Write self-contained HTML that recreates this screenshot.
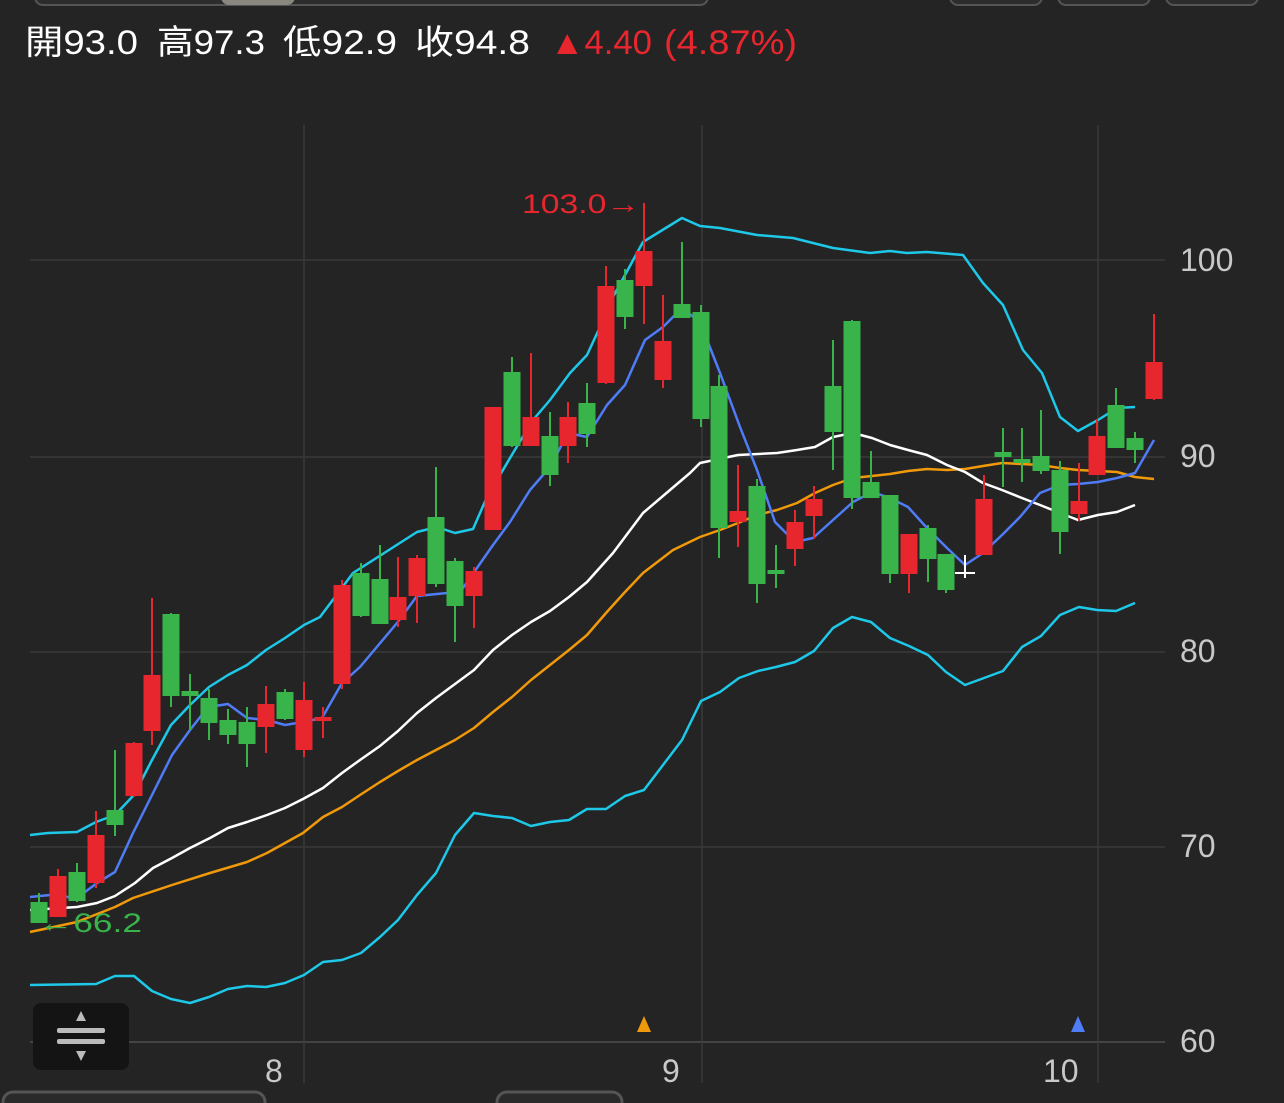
<!DOCTYPE html>
<html><head><meta charset="utf-8"><style>
html,body{margin:0;padding:0;background:#242424;width:1284px;height:1103px;overflow:hidden}
svg{display:block}
</style></head><body>
<svg width="1284" height="1103" viewBox="0 0 1284 1103" xmlns="http://www.w3.org/2000/svg">
<rect width="1284" height="1103" fill="#242424"/>
<!-- top controls -->
<rect x="35" y="-30" width="673" height="35" rx="8" fill="#2c2c2c" stroke="#555" stroke-width="2"/>
<rect x="221" y="-20" width="74" height="25" rx="8" fill="#8a8780"/>
<rect x="950" y="-30" width="92" height="35" rx="8" fill="#2c2c2c" stroke="#555" stroke-width="2"/>
<rect x="1058" y="-30" width="92" height="35" rx="8" fill="#2c2c2c" stroke="#555" stroke-width="2"/>
<rect x="1166" y="-30" width="92" height="35" rx="8" fill="#2c2c2c" stroke="#555" stroke-width="2"/>
<!-- header -->
<g font-family="Liberation Sans, Noto Sans CJK TC, sans-serif" font-size="34" fill="#fff">
<text x="25" y="54" textLength="113" lengthAdjust="spacingAndGlyphs">開93.0</text>
<text x="157" y="54" textLength="108" lengthAdjust="spacingAndGlyphs">高97.3</text>
<text x="283" y="54" textLength="114" lengthAdjust="spacingAndGlyphs">低92.9</text>
<text x="415" y="54" textLength="115" lengthAdjust="spacingAndGlyphs">收94.8</text>
<text x="550" y="54" fill="#e8262e" textLength="102" lengthAdjust="spacingAndGlyphs">▲4.40</text>
<text x="664" y="54" fill="#e8262e" textLength="133" lengthAdjust="spacingAndGlyphs">(4.87%)</text>
</g>
<!-- grid -->
<g stroke="#3a3a3a" stroke-width="1.5">
<line x1="30" y1="260" x2="1165" y2="260"/><line x1="30" y1="457" x2="1165" y2="457"/>
<line x1="30" y1="652" x2="1165" y2="652"/><line x1="30" y1="847" x2="1165" y2="847"/>
<line x1="30" y1="1042" x2="1165" y2="1042" stroke="#444" stroke-width="2"/>
<line x1="304" y1="125" x2="304" y2="1083"/><line x1="702" y1="125" x2="702" y2="1083"/><line x1="1098" y1="125" x2="1098" y2="1083"/>
</g>
<g font-family="Liberation Sans, sans-serif" font-size="32" fill="#c8c8c8">
<text x="1180" y="271">100</text><text x="1180" y="467">90</text><text x="1180" y="662">80</text><text x="1180" y="857">70</text><text x="1180" y="1052">60</text>
<text x="265" y="1082">8</text><text x="662" y="1082">9</text><text x="1043" y="1082">10</text>
</g>
<!-- bands & MAs -->
<g fill="none" stroke-width="2.5" stroke-linejoin="round">
<polyline stroke="#1ec8e8" points="30,835 48,833 77,832 96,822 115,815 134,795 152,760 171,725 190,705 209,687 228,675 247,665 266,650 285,638 304,625 320,617 353,573 417,532 437,527 455,533 473,529 487,497 513,453 533,420 550,400 570,373 587,355 600,327 613,297 643,242 682,218 700,226 720,228 757,235 793,238 833,248 870,253 890,251 907,253 927,252 963,255 983,283 1003,305 1023,350 1042,373 1060,417 1078,431 1098,420 1117,408 1135,407"/>
<polyline stroke="#1ec8e8" points="30,985 96,984 115,976 134,976 152,991 171,999 190,1003 209,997 228,989 247,986 266,987 285,983 304,975 323,962 342,960 361,953 380,937 398,920 417,895 436,873 455,835 474,813 493,816 512,818 531,826 550,822 569,820 587,809 606,809 625,796 644,790 663,765 682,740 701,701 720,692 739,678 758,671 776,667 795,662 814,651 833,628 852,617 871,622 890,638 909,646 928,655 946,672 965,685 984,678 1003,671 1022,647 1041,636 1060,615 1079,607 1097,610 1116,611 1135,603"/>
<polyline stroke="#f0990a" points="30,932 77,922 115,907 133,898 172,885 210,873 247,862 267,853 303,833 323,817 342,807 360,795 380,782 398,771 417,760 436,750 455,740 474,728 493,712 512,697 531,680 550,665 569,650 587,635 606,613 625,592 643,573 673,550 700,537 720,530 738,523 757,515 777,510 797,503 815,493 833,485 853,478 872,476 890,474 908,471 927,469 947,470 965,469 983,466 1002,463 1022,464 1040,465 1060,468 1078,470 1098,471 1117,472 1135,477 1154,479"/>
<polyline stroke="#ffffff" points="30,910 77,907 97,903 115,896 135,883 153,868 172,858 190,848 210,838 228,828 247,822 267,815 285,808 303,799 323,788 342,773 360,760 380,746 398,731 417,713 436,698 455,684 474,670 493,650 512,635 531,622 550,611 569,597 587,582 613,553 643,513 670,490 690,473 700,463 738,455 777,453 797,450 815,447 833,437 853,433 872,438 890,445 908,450 927,455 947,465 965,472 983,483 1002,490 1022,498 1040,505 1060,513 1078,520 1098,515 1117,512 1135,505"/>
<polyline stroke="#4f7cf7" points="30,897 50,895 77,898 97,883 115,872 133,833 153,793 172,755 190,730 208,707 228,704 247,718 267,720 285,725 303,722 322,718 342,683 360,667 397,623 417,596 447,593 463,588 493,545 510,522 530,490 550,467 568,433 587,437 607,405 625,385 645,340 663,327 682,308 700,322 720,373 740,427 757,470 775,522 795,542 813,538 833,520 853,502 872,492 890,498 908,507 927,528 947,548 965,565 983,553 1002,535 1020,517 1040,493 1060,485 1078,484 1098,482 1117,478 1135,473 1154,440"/>
</g>
<!-- candles -->
<g stroke-width="2">
<g stroke="#38b44a" fill="#38b44a">
<line x1="39" y1="893" x2="39" y2="922"/><rect x="31.5" y="903" width="15" height="19"/>
<line x1="77" y1="863" x2="77" y2="902"/><rect x="69.5" y="873" width="15" height="27"/>
<line x1="115" y1="750" x2="115" y2="836"/><rect x="107.5" y="811" width="15" height="13"/>
<line x1="171" y1="613" x2="171" y2="707"/><rect x="163.5" y="615" width="15" height="80"/>
<line x1="190" y1="674" x2="190" y2="730"/><rect x="182.5" y="692" width="15" height="3"/>
<line x1="209" y1="689" x2="209" y2="740"/><rect x="201.5" y="699" width="15" height="23"/>
<line x1="228" y1="709" x2="228" y2="744"/><rect x="220.5" y="721" width="15" height="13"/>
<line x1="247" y1="707" x2="247" y2="767"/><rect x="239.5" y="723" width="15" height="20"/>
<line x1="285" y1="689" x2="285" y2="720"/><rect x="277.5" y="693" width="15" height="25"/>
<line x1="361" y1="563" x2="361" y2="617"/><rect x="353.5" y="574" width="15" height="41"/>
<line x1="380" y1="545" x2="380" y2="623"/><rect x="372.5" y="580" width="15" height="43"/>
<line x1="436" y1="467" x2="436" y2="587"/><rect x="428.5" y="518" width="15" height="65"/>
<line x1="455" y1="558" x2="455" y2="642"/><rect x="447.5" y="562" width="15" height="43"/>
<line x1="512" y1="357" x2="512" y2="447"/><rect x="504.5" y="373" width="15" height="72"/>
<line x1="550" y1="412" x2="550" y2="486"/><rect x="542.5" y="437" width="15" height="37"/>
<line x1="587" y1="383" x2="587" y2="447"/><rect x="579.5" y="404" width="15" height="29"/>
<line x1="625" y1="269" x2="625" y2="329"/><rect x="617.5" y="281" width="15" height="35"/>
<line x1="682" y1="242" x2="682" y2="317"/><rect x="674.5" y="305" width="15" height="12"/>
<line x1="701" y1="305" x2="701" y2="427"/><rect x="693.5" y="313" width="15" height="105"/>
<line x1="719" y1="375" x2="719" y2="558"/><rect x="711.5" y="387" width="15" height="140"/>
<line x1="757" y1="479" x2="757" y2="603"/><rect x="749.5" y="487" width="15" height="96"/>
<line x1="776" y1="545" x2="776" y2="588"/><rect x="768.5" y="571" width="15" height="2"/>
<line x1="833" y1="340" x2="833" y2="470"/><rect x="825.5" y="387" width="15" height="44"/>
<line x1="852" y1="320" x2="852" y2="509"/><rect x="844.5" y="322" width="15" height="175"/>
<line x1="871" y1="451" x2="871" y2="497"/><rect x="863.5" y="483" width="15" height="14"/>
<line x1="890" y1="496" x2="890" y2="583"/><rect x="882.5" y="496" width="15" height="77"/>
<line x1="928" y1="525" x2="928" y2="582"/><rect x="920.5" y="529" width="15" height="29"/>
<line x1="946" y1="555" x2="946" y2="593"/><rect x="938.5" y="555" width="15" height="34"/>
<line x1="1003" y1="428" x2="1003" y2="487"/><rect x="995.5" y="453" width="15" height="3"/>
<line x1="1022" y1="428" x2="1022" y2="482"/><rect x="1014.5" y="460" width="15" height="2"/>
<line x1="1041" y1="410" x2="1041" y2="474"/><rect x="1033.5" y="457" width="15" height="13"/>
<line x1="1060" y1="461" x2="1060" y2="554"/><rect x="1052.5" y="471" width="15" height="60"/>
<line x1="1116" y1="388" x2="1116" y2="447"/><rect x="1108.5" y="406" width="15" height="41"/>
<line x1="1135" y1="432" x2="1135" y2="463"/><rect x="1127.5" y="439" width="15" height="10"/>
</g>
<g stroke="#e8262e" fill="#e8262e">
<line x1="58" y1="869" x2="58" y2="916"/><rect x="50.5" y="877" width="15" height="39"/>
<line x1="96" y1="811" x2="96" y2="888"/><rect x="88.5" y="836" width="15" height="46"/>
<line x1="134" y1="742" x2="134" y2="797"/><rect x="126.5" y="744" width="15" height="51"/>
<line x1="152" y1="598" x2="152" y2="745"/><rect x="144.5" y="676" width="15" height="54"/>
<line x1="266" y1="686" x2="266" y2="753"/><rect x="258.5" y="705" width="15" height="21"/>
<line x1="304" y1="682" x2="304" y2="757"/><rect x="296.5" y="701" width="15" height="48"/>
<line x1="323" y1="707" x2="323" y2="738"/><rect x="315.5" y="718" width="15" height="2"/>
<line x1="342" y1="580" x2="342" y2="689"/><rect x="334.5" y="586" width="15" height="97"/>
<line x1="398" y1="557" x2="398" y2="627"/><rect x="390.5" y="598" width="15" height="21"/>
<line x1="417" y1="555" x2="417" y2="623"/><rect x="409.5" y="559" width="15" height="36"/>
<line x1="474" y1="567" x2="474" y2="628"/><rect x="466.5" y="572" width="15" height="23"/>
<rect x="485.5" y="408" width="15" height="121"/>
<line x1="531" y1="353" x2="531" y2="445"/><rect x="523.5" y="418" width="15" height="27"/>
<line x1="568" y1="402" x2="568" y2="463"/><rect x="560.5" y="418" width="15" height="27"/>
<line x1="606" y1="266" x2="606" y2="384"/><rect x="598.5" y="287" width="15" height="95"/>
<line x1="644" y1="203" x2="644" y2="324"/><rect x="636.5" y="252" width="15" height="33"/>
<line x1="663" y1="295" x2="663" y2="388"/><rect x="655.5" y="342" width="15" height="37"/>
<line x1="738" y1="465" x2="738" y2="547"/><rect x="730.5" y="512" width="15" height="9"/>
<line x1="795" y1="510" x2="795" y2="566"/><rect x="787.5" y="523" width="15" height="25"/>
<line x1="814" y1="486" x2="814" y2="539"/><rect x="806.5" y="500" width="15" height="15"/>
<line x1="909" y1="535" x2="909" y2="593"/><rect x="901.5" y="535" width="15" height="38"/>
<line x1="984" y1="475" x2="984" y2="554"/><rect x="976.5" y="500" width="15" height="54"/>
<line x1="1079" y1="463" x2="1079" y2="521"/><rect x="1071.5" y="502" width="15" height="11"/>
<line x1="1097" y1="419" x2="1097" y2="474"/><rect x="1089.5" y="437" width="15" height="37"/>
<line x1="1154" y1="314" x2="1154" y2="400"/><rect x="1146.5" y="363" width="15" height="35"/>
</g>
<g stroke="#fff"><line x1="965" y1="555" x2="965" y2="578"/><line x1="955" y1="573" x2="975" y2="573"/></g>
</g>
<!-- annotations -->
<text x="522" y="213" font-family="Liberation Sans, sans-serif" font-size="27" fill="#e8262e" textLength="118" lengthAdjust="spacingAndGlyphs">103.0→</text>
<text x="38" y="932" font-family="Liberation Sans, sans-serif" font-size="27" fill="#38b44a" textLength="104" lengthAdjust="spacingAndGlyphs">←66.2</text>
<!-- markers -->
<path d="M644 1016 L651 1032 L637 1032 Z" fill="#f0990a"/>
<path d="M1078 1016 L1085 1032 L1071 1032 Z" fill="#4f7cf7"/>
<!-- handle -->
<rect x="33" y="1003" width="96" height="67" rx="8" fill="#141414"/>
<path d="M81 1011 L86 1021 L76 1021 Z" fill="#bbb"/>
<rect x="57" y="1028" width="48" height="5" rx="2" fill="#bbb"/>
<rect x="57" y="1039" width="48" height="5" rx="2" fill="#bbb"/>
<path d="M81 1061 L86 1051 L76 1051 Z" fill="#bbb"/>
<!-- bottom tabs -->
<rect x="3" y="1092" width="262" height="40" rx="10" fill="#2a2a2a" stroke="#555" stroke-width="3"/>
<rect x="497" y="1092" width="125" height="40" rx="10" fill="#2a2a2a" stroke="#555" stroke-width="3"/>
</svg>
</body></html>
